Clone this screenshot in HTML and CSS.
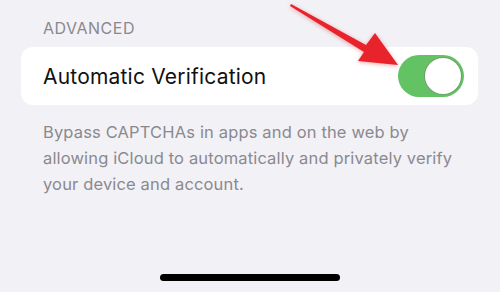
FILE: index.html
```html
<!DOCTYPE html>
<html lang="en">
<head>
    <meta charset="UTF-8">
    <meta name="viewport" content="width=device-width, initial-scale=1.0">
    <title>Advanced</title>
    <link rel="stylesheet" href="styles.css">
</head>
<body>

    <div class="screen">
        <!-- Section header -->
        <div class="section-title">ADVANCED</div>

        <!-- Setting row -->
        <div class="card">
            <span class="row-label">Automatic Verification</span>
            <div class="toggle on">
                <div class="knob"></div>
            </div>
        </div>

        <p class="footnote">Bypass CAPTCHAs in apps and on the web by allowing iCloud to automatically and privately verify your device and account.</p>

        <div class="home-bar"></div>

        <!-- Annotation arrow -->
        <svg class="arrow" width="500" height="100" viewBox="0 0 500 100">
            <polygon points="291,4 366,45 375,33 398,65 358,61 364,52 290,6" fill="#e8232b"/>
        </svg>
    </div>

</body>
</html>
```

FILE: styles.css
```css
body {
    margin: 0;
    background-color: #f2f1f6;
    font-family: Inter, "Noto Sans", sans-serif;
}

.screen {
    position: relative;
    width: 500px;
    height: 292px;
    padding: 18px 22px 0 21px;
    box-sizing: border-box;
    display: flex;
    flex-direction: column;
}

.section-title {
    font-size: 16px;
    color: #8a898e;
    padding-left: 22px;
    letter-spacing: 0.5px;
    margin-bottom: 9px;
}

.card {
    height: 58px;
    background-color: #ffffff;
    border-radius: 12px;
    display: flex;
    justify-content: space-between;
    align-items: center;
    padding: 0 14px 0 22px;
}

.row-label {
    font-size: 21px;
    letter-spacing: 0.2px;
    color: #111111;
}

.toggle {
    width: 66px;
    height: 42px;
    border-radius: 21px;
    background-color: #e3e3e6;
    display: flex;
    align-items: center;
    padding: 0 3px;
    box-sizing: border-box;
}

.toggle.on {
    background-color: #63c264;
    justify-content: flex-end;
}

.knob {
    width: 36px;
    height: 36px;
    border-radius: 50%;
    background-color: #ffffff;
    box-shadow: 0 0 0 1px #6f9e6f;
}

.footnote {
    width: 425px;
    margin: 14px 0 0 22px;
    font-size: 16.5px;
    letter-spacing: 0.15px;
    line-height: 26px;
    color: #8a898e;
}

.home-bar {
    width: 180px;
    height: 7px;
    border-radius: 4px;
    background-color: #000000;
    margin: auto auto 11px 139px;
}

.arrow {
    position: absolute;
    top: 0;
    left: 0;
    filter: drop-shadow(0 1px 2px rgba(200, 0, 0, 0.35));
}
```
